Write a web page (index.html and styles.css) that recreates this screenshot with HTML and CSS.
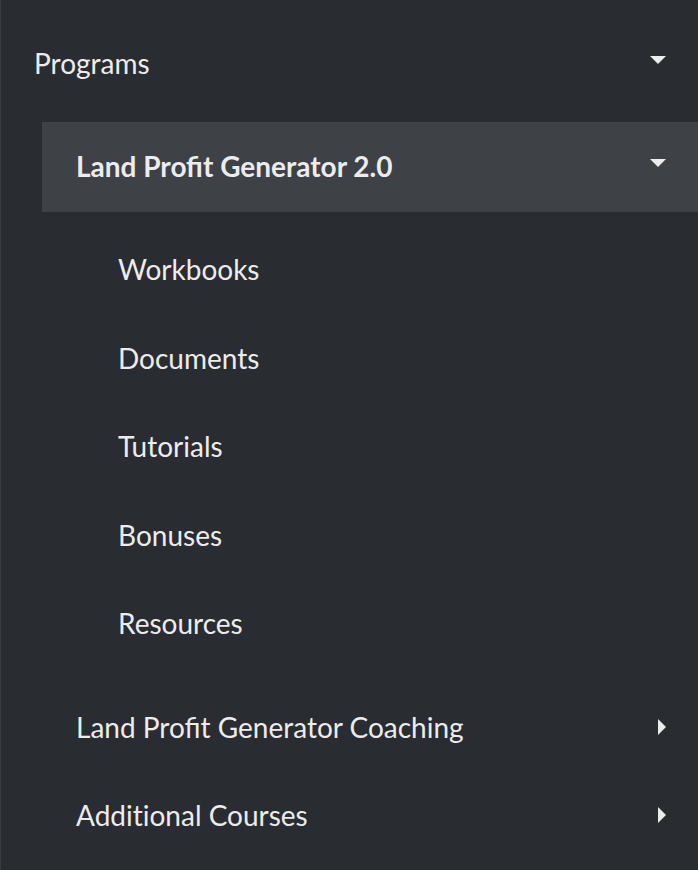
FILE: index.html
```html
<!DOCTYPE html>
<html lang="en">
<head>
<meta charset="utf-8">
<title>Programs menu</title>
<link rel="stylesheet" href="styles.css">
</head>
<body>
<nav class="sidebar">
  <div class="row row-top">
    <span class="label">Programs</span>
    <span class="caret caret-down"></span>
  </div>
  <div class="submenu">
    <div class="row row-active">
      <span class="label label-bold">Land Profit Generator 2.0</span>
      <span class="caret caret-down"></span>
    </div>
    <ul class="leaf-list">
      <li class="leaf">Workbooks</li>
      <li class="leaf">Documents</li>
      <li class="leaf">Tutorials</li>
      <li class="leaf">Bonuses</li>
      <li class="leaf">Resources</li>
    </ul>
    <div class="row row-sub">
      <span class="label">Land Profit Generator Coaching</span>
      <span class="caret caret-right"></span>
    </div>
    <div class="row row-sub">
      <span class="label">Addit&zwnj;ional Courses</span>
      <span class="caret caret-right"></span>
    </div>
  </div>
</nav>
</body>
</html>
```
FILE: styles.css
```css
* { box-sizing: border-box; }
html, body {
  margin: 0;
  padding: 0;
  height: 100%;
  background: #292c31;
}
body {
  font-family: Lato, "Open Sans", sans-serif;
  color: #ececec;
  overflow: hidden;
}
.sidebar {
  min-height: 100%;
  border-left: 1px solid #3a3d42;
  padding-top: 20px;
}
.row {
  display: flex;
  align-items: center;
  justify-content: space-between;
  height: 88px;
  padding-right: 32px;
  padding-bottom: 2px;
  font-size: 28px;
}
.row-top {
  padding-left: 33px;
}
.submenu {
  margin-left: 41px;
  margin-top: 14px;
}
.row-active {
  height: 90px;
  background: #3e4146;
  padding-left: 34px;
}
.row-sub {
  padding-left: 34px;
}
.label-bold {
  font-weight: 700;
}
.leaf-list {
  list-style: none;
  margin: 14px 0 15px;
  padding: 0;
}
.leaf {
  height: 88.5px;
  display: flex;
  align-items: center;
  padding-left: 76px;
  padding-bottom: 2px;
  font-size: 28px;
}
.caret {
  display: block;
  width: 0;
  height: 0;
}
.caret-down {
  border-left: 8px solid transparent;
  border-right: 8px solid transparent;
  border-top: 8px solid #ececec;
  transform: translateY(-3px);
}
.caret-right {
  border-top: 8px solid transparent;
  border-bottom: 8px solid transparent;
  border-left: 8px solid #ececec;
}
```
